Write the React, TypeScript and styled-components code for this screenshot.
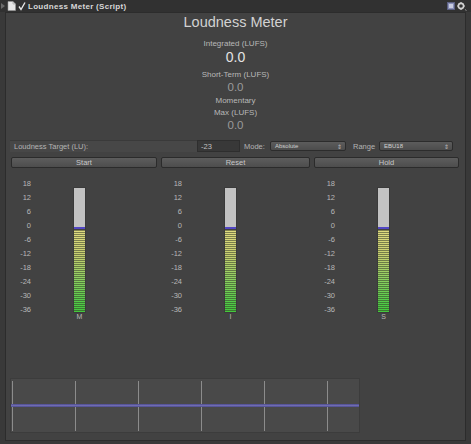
import React from 'react';
import styled, { createGlobalStyle } from 'styled-components';

const GlobalStyle = createGlobalStyle`
  html, body {
    margin: 0;
    padding: 0;
    background: #393939;
  }
  body {
    font-family: 'Liberation Sans', Arial, sans-serif;
    color: #c8c8c8;
  }
`;

const Page = styled.div`
  width: 471px;
  height: 444px;
  display: flex;
  flex-direction: column;
  background: #393939;
  overflow: hidden;
`;

const TitleBar = styled.div`
  height: 12px;
  display: flex;
  align-items: center;
  gap: 2px;
  padding: 0 4px 0 1px;
  background: #313131;
`;

const TitleText = styled.span`
  font-size: 8px;
  font-weight: bold;
  color: #d8d8d8;
  letter-spacing: 0.3px;
  flex: 1;
`;

const Panel = styled.div`
  flex: 1;
  margin: 0 5px 3px 5px;
  border: 1px solid #2c2c2c;
  background: #424242;
  padding: 0 5px;
  display: flex;
  flex-direction: column;
`;

const Heading = styled.div`
  text-align: center;
  font-size: 14.5px;
  line-height: 18px;
  color: #d2d2d2;
`;

const StatLabel = styled.div<{ gap?: number }>`
  text-align: center;
  font-size: 8px;
  line-height: 10px;
  color: #b8b8b8;
  margin-top: ${({ gap }) => gap ?? 0}px;
`;

const StatValue = styled.div<{ big?: boolean }>`
  text-align: center;
  font-size: ${({ big }) => (big ? '14px' : '11.5px')};
  line-height: ${({ big }) => (big ? '16px' : '14px')};
  color: ${({ big }) => (big ? '#e4e4e4' : '#9a9a9a')};
`;

const ControlsRow = styled.div`
  margin: 8px 6px 0 -1px;
  height: 12px;
  display: flex;
  align-items: center;
  font-size: 7.5px;
  color: #b4b4b4;
`;

const FieldLabel = styled.div`
  width: 187px;
  height: 12px;
  padding-left: 4px;
  display: flex;
  align-items: center;
  background: #474747;
  border-top: 1px solid #3a3a3a;
  box-sizing: border-box;
`;

const NumberInput = styled.div`
  width: 43px;
  height: 12px;
  padding-left: 3px;
  box-sizing: border-box;
  display: flex;
  align-items: center;
  background: #383838;
  border: 1px solid #2e2e2e;
  color: #c0c0c0;
`;

const InlineLabel = styled.span<{ left: number }>`
  margin-left: ${({ left }) => left}px;
  width: 24px;
`;

const Dropdown = styled.div<{ width: number }>`
  width: ${({ width }) => width}px;
  height: 10px;
  margin-left: 2px;
  box-sizing: border-box;
  padding: 0 3px 0 4px;
  display: flex;
  align-items: center;
  justify-content: space-between;
  background: linear-gradient(#5c5c5c, #4c4c4c);
  border: 1px solid #2c2c2c;
  border-radius: 2px;
  font-size: 6px;
  color: #d0d0d0;
`;

const Arrows = styled.span`
  font-size: 6px;
  color: #bbb;
`;

const ButtonRow = styled.div`
  margin-top: 5px;
  display: grid;
  grid-template-columns: 146px 149px 145px;
  column-gap: 4px;
`;

const Button = styled.div`
  height: 11px;
  box-sizing: border-box;
  display: flex;
  align-items: center;
  justify-content: center;
  background: linear-gradient(#5d5d5d, #4d4d4d);
  border: 1px solid #2b2b2b;
  border-radius: 2px;
  font-size: 7.5px;
  color: #c8c8c8;
`;

const Meters = styled.div`
  margin-top: 9px;
  display: grid;
  grid-template-columns: 151px 153px 145px;
`;

const MeterGroup = styled.div`
  display: flex;
  align-items: flex-start;
`;

const Scale = styled.div`
  width: 20px;
  display: flex;
  flex-direction: column;
  align-items: flex-end;
  font-size: 7.5px;
  line-height: 14px;
  color: #b8b8b8;
`;

const BarColumn = styled.div`
  margin: 10px 0 0 42px;
  display: flex;
  flex-direction: column;
  align-items: center;
`;

const Bar = styled.div`
  width: 13px;
  height: 126px;
  box-sizing: border-box;
  border: 1px solid #3a3a3a;
  display: flex;
  flex-direction: column;
`;

const Headroom = styled.div`
  height: 39px;
  background: #c2c2c2;
  border-bottom: 2px solid #5246c4;
`;

const Level = styled.div`
  flex: 1;
  margin-top: 1px;
  background:
    repeating-linear-gradient(to bottom, rgba(50, 54, 40, 0.55) 0 1px, transparent 1px 2px),
    linear-gradient(#e0dc80, #c8d070 30%, #8cd060 60%, #52cc48 88%, #44c83c);
`;

const Channel = styled.div`
  font-size: 7px;
  line-height: 8px;
  color: #b8b8b8;
`;

const Graph = styled.div`
  margin: 57px 0 0 -1px;
  width: 350px;
  height: 55px;
  box-sizing: border-box;
  background: #494949;
  border: 1px solid #3c3c3c;
  position: relative;
  display: grid;
  grid-template-columns: repeat(6, 63px);
  padding: 2px 0 0 1px;
`;

const GridLine = styled.div`
  border-left: 1px solid #8c8c8c;
  height: 50px;
`;

const Trace = styled.div`
  position: absolute;
  left: 0;
  right: 0;
  top: 25px;
  height: 3px;
  background: linear-gradient(#4c4a8e, #6f6cb0, #4c4a8e);
`;

const scaleMarks = ['18', '12', '6', '0', '-6', '-12', '-18', '-24', '-30', '-36'];

const DocIcon = () => (
  <svg width="9" height="10" viewBox="0 0 9 10">
    <path d="M1 0.5h5l2.5 2.5v6.5h-7.5z" fill="#e6e6e6" stroke="#9a9a9a" strokeWidth="0.6" />
    <path d="M6 0.5v2.5h2.5" fill="none" stroke="#9a9a9a" strokeWidth="0.6" />
  </svg>
);

const CheckIcon = () => (
  <svg width="8" height="9" viewBox="0 0 8 9">
    <path d="M1 4.5l2 3 4-7" fill="none" stroke="#e6e6e6" strokeWidth="1.4" />
  </svg>
);

const FoldIcon = () => (
  <svg width="4" height="6" viewBox="0 0 4 6">
    <path d="M0 0l4 3-4 3z" fill="#6a6a6a" />
  </svg>
);

const HelpIcon = () => (
  <svg width="8" height="8" viewBox="0 0 8 8">
    <rect x="0.5" y="0.5" width="7" height="7" fill="#8a90b8" stroke="#5a5f80" />
    <rect x="2" y="2" width="4" height="4" fill="#c8cce0" />
  </svg>
);

const GearIcon = () => (
  <svg width="10" height="9" viewBox="0 0 10 9">
    <circle cx="4" cy="4" r="2.6" fill="none" stroke="#d0d0d0" strokeWidth="1.6" />
    <path d="M4 0v1.5M4 6.5V8M0 4h1.5M6.5 4H8" stroke="#d0d0d0" strokeWidth="1.2" />
    <path d="M8 7.5l1.5 1" stroke="#b0b0b0" strokeWidth="0.8" />
  </svg>
);

const Meter = ({ channel }: { channel: string }) => (
  <MeterGroup>
    <Scale>
      {scaleMarks.map((m) => (
        <span key={m}>{m}</span>
      ))}
    </Scale>
    <BarColumn>
      <Bar>
        <Headroom />
        <Level />
      </Bar>
      <Channel>{channel}</Channel>
    </BarColumn>
  </MeterGroup>
);

export default function App() {
  return (
    <Page>
      <GlobalStyle />
      <TitleBar>
        <FoldIcon />
        <DocIcon />
        <CheckIcon />
        <TitleText>Loudness Meter (Script)</TitleText>
        <HelpIcon />
        <GearIcon />
      </TitleBar>
      <Panel>
        <Heading>Loudness Meter</Heading>
        <StatLabel gap={8}>Integrated (LUFS)</StatLabel>
        <StatValue big>0.0</StatValue>
        <StatLabel gap={5}>Short-Term (LUFS)</StatLabel>
        <StatValue>0.0</StatValue>
        <StatLabel gap={2}>Momentary</StatLabel>
        <StatLabel gap={2}>Max (LUFS)</StatLabel>
        <StatValue>0.0</StatValue>
        <ControlsRow>
          <FieldLabel>Loudness Target (LU):</FieldLabel>
          <NumberInput>-23</NumberInput>
          <InlineLabel left={4}>Mode:</InlineLabel>
          <Dropdown width={76}>
            Absolute<Arrows>⇕</Arrows>
          </Dropdown>
          <InlineLabel left={7}>Range</InlineLabel>
          <Dropdown width={74}>
            EBU18<Arrows>⇕</Arrows>
          </Dropdown>
        </ControlsRow>
        <ButtonRow>
          <Button>Start</Button>
          <Button>Reset</Button>
          <Button>Hold</Button>
        </ButtonRow>
        <Meters>
          <Meter channel="M" />
          <Meter channel="I" />
          <Meter channel="S" />
        </Meters>
        <Graph>
          {Array.from({ length: 6 }).map((_, i) => (
            <GridLine key={i} />
          ))}
          <Trace />
        </Graph>
      </Panel>
    </Page>
  );
}
